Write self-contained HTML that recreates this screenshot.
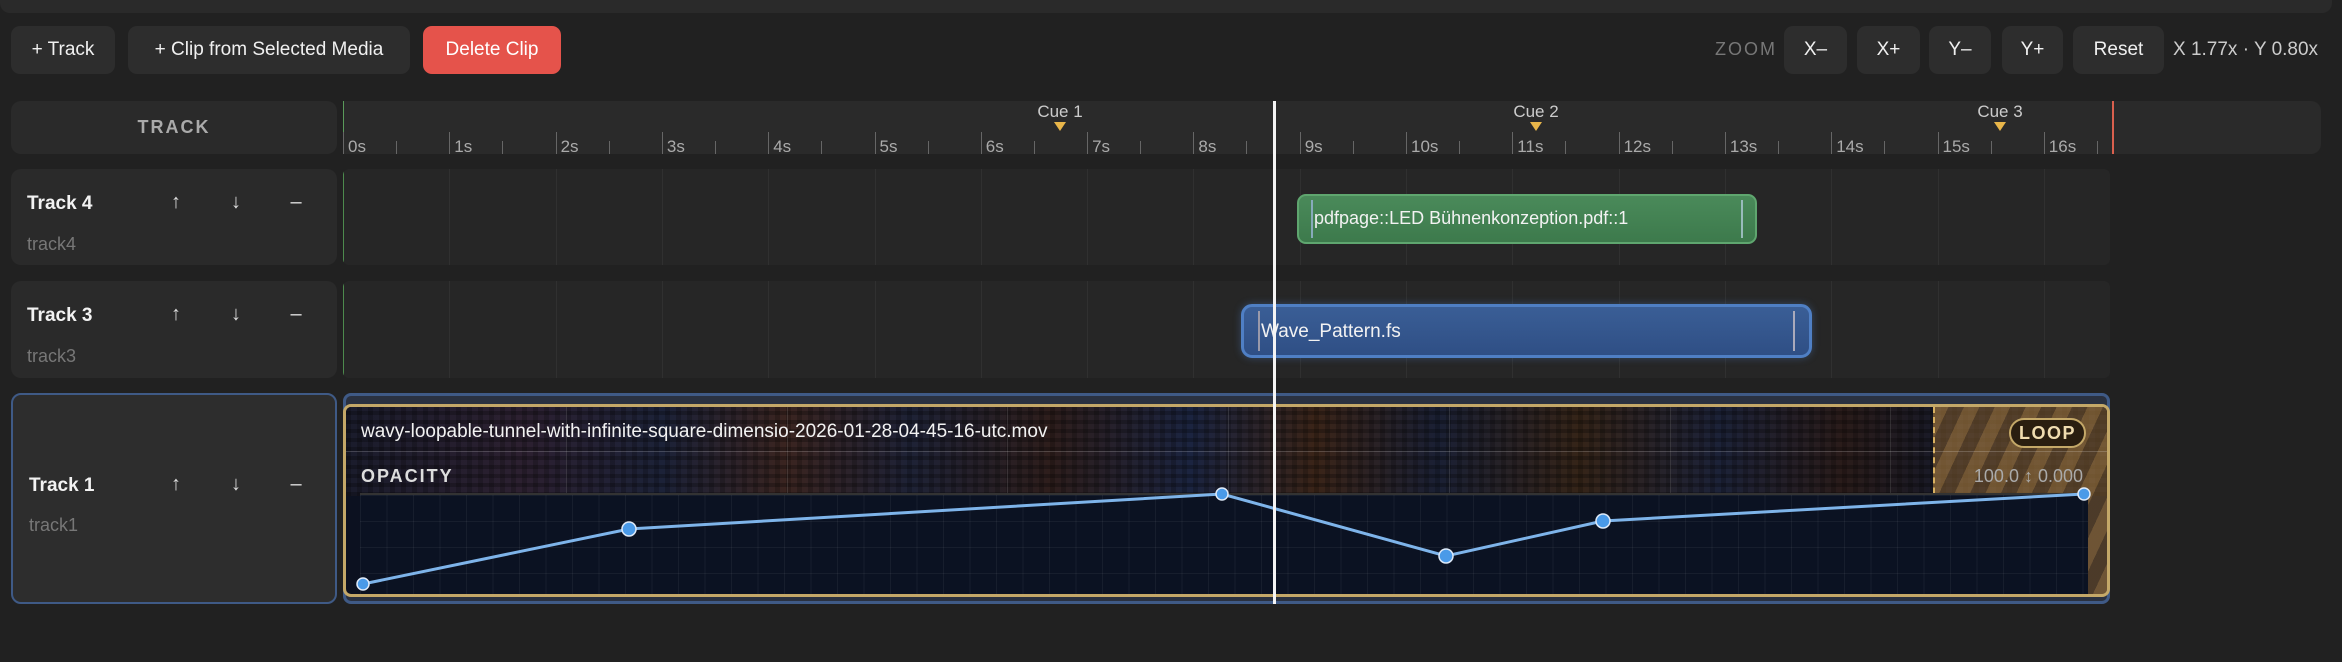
<!DOCTYPE html>
<html><head><meta charset="utf-8"><style>
*{box-sizing:border-box;margin:0;padding:0}
body{width:2342px;height:662px;background:#212121;position:relative;overflow:hidden;font-family:"Liberation Sans",sans-serif;color:#eee}
.a{position:absolute}
.btn{position:absolute;top:26px;height:48px;background:#2d2d2d;border-radius:9px;color:#f0f0f0;font-size:19px;display:flex;align-items:center;justify-content:center}
.panel{position:absolute;background:#2a2a2a;border-radius:10px}
.lane{position:absolute;left:343px;width:1767px;background:#262626;border-radius:6px;overflow:hidden}
.vl{position:absolute;top:0;bottom:0;width:1px;background:#303030}
.tn{position:absolute;left:16px;font-size:19px;font-weight:bold;color:#f2f2f2}
.ts{position:absolute;left:16px;font-size:18px;color:#777}
.ic{position:absolute;font-size:20px;color:#ddd;width:30px;text-align:center}
.tick{position:absolute;width:1px;background:#666}
.lbl{position:absolute;top:137px;font-size:17px;color:#aaa}
.cue{position:absolute;top:102px;font-size:17px;color:#ccc;transform:translateX(-50%)}
.tri{position:absolute;top:122px;width:0;height:0;border-left:6px solid transparent;border-right:6px solid transparent;border-top:9px solid #e9b64a;transform:translateX(-6px)}
</style></head><body>
<div class="a" style="left:0;top:0;width:2332px;height:13px;background:#2a2a2a;border-radius:0 0 10px 10px"></div>
<div class="btn" style="left:11px;width:104px">+ Track</div>
<div class="btn" style="left:128px;width:282px">+ Clip from Selected Media</div>
<div class="btn" style="left:423px;width:138px;background:#e5534b;color:#fff">Delete Clip</div>
<div class="a" style="left:1715px;top:39px;font-size:18px;color:#777;letter-spacing:2px">ZOOM</div>
<div class="btn" style="left:1784px;width:63px">X–</div>
<div class="btn" style="left:1857px;width:63px">X+</div>
<div class="btn" style="left:1929px;width:62px">Y–</div>
<div class="btn" style="left:2002px;width:61px">Y+</div>
<div class="btn" style="left:2073px;width:91px">Reset</div>
<div class="a" style="left:2173px;top:39px;font-size:19px;color:#ccc">X 1.77x · Y 0.80x</div>

<div class="panel" style="left:11px;top:101px;width:326px;height:53px;display:flex;align-items:center;justify-content:center;font-size:18px;font-weight:bold;color:#aaa;letter-spacing:2px">TRACK</div>
<div class="panel" style="left:343px;top:101px;width:1978px;height:53px;border-radius:0 10px 10px 0"></div>
<div class="a" style="left:343px;top:101px;width:1px;height:53px;background:#5a9a5a"></div>
<div id="ruler"></div>
<div class="a" style="left:2112px;top:101px;width:2px;height:53px;background:#d9604e"></div>
<div class="cue" style="left:1060px">Cue 1</div><div class="tri" style="left:1060px"></div>
<div class="cue" style="left:1536px">Cue 2</div><div class="tri" style="left:1536px"></div>
<div class="cue" style="left:2000px">Cue 3</div><div class="tri" style="left:2000px"></div>

<!-- Track 4 -->
<div class="panel" style="left:11px;top:169px;width:326px;height:96px">
<div class="tn" style="top:24px">Track 4</div><div class="ts" style="top:65px">track4</div>
<div class="ic" style="left:150px;top:22px">↑</div><div class="ic" style="left:210px;top:22px">↓</div><div class="ic" style="left:270px;top:22px">–</div></div>
<div class="lane g" style="top:169px;height:96px"><div class="a" style="left:0;top:0;width:1px;height:100%;background:#4d8a4d"></div></div>
<div class="a" style="left:1297px;top:194px;width:460px;height:50px;background:linear-gradient(#4a8a5a,#3d7a4c);border:2px solid #5fa66f;border-radius:9px;font-size:18px;color:#f2f2f2;padding:12px 0 0 15px">pdfpage::LED Bühnenkonzeption.pdf::1
<div class="a" style="left:12px;top:4px;width:2px;height:38px;background:#8ab"></div><div class="a" style="right:12px;top:4px;width:2px;height:38px;background:#9bb"></div></div>

<!-- Track 3 -->
<div class="panel" style="left:11px;top:281px;width:326px;height:97px">
<div class="tn" style="top:24px">Track 3</div><div class="ts" style="top:65px">track3</div>
<div class="ic" style="left:150px;top:22px">↑</div><div class="ic" style="left:210px;top:22px">↓</div><div class="ic" style="left:270px;top:22px">–</div></div>
<div class="lane g" style="top:281px;height:97px"><div class="a" style="left:0;top:0;width:1px;height:100%;background:#4d8a4d"></div></div>
<div class="a" style="left:1241px;top:304px;width:571px;height:54px;background:linear-gradient(#3a5e96,#2f4f85);border:3px solid #4f7fc4;border-radius:11px;font-size:19px;color:#f2f2f2;padding:14px 0 0 17px;box-shadow:0 0 8px rgba(80,130,200,.4)">Wave_Pattern.fs
<div class="a" style="left:14px;top:4px;width:2px;height:40px;background:#99a"></div><div class="a" style="right:14px;top:4px;width:2px;height:40px;background:#aab"></div></div>

<!-- Track 1 -->
<div class="panel" style="left:11px;top:393px;width:326px;height:211px;border:2px solid #3f5a86;background:#2d2d2d">
<div class="tn" style="top:80px">Track 1</div><div class="ts" style="top:120px">track1</div>
<div class="ic" style="left:148px;top:78px">↑</div><div class="ic" style="left:208px;top:78px">↓</div><div class="ic" style="left:268px;top:78px">–</div></div>
<div class="a" style="left:343px;top:393px;width:1767px;height:211px;background:#2a3140;border:3px solid #3f5a86;border-radius:8px"></div>
<div class="a" style="left:343px;top:404px;width:1767px;height:193px;border:3px solid #c4a868;border-radius:8px;overflow:hidden;background:#0c1120">
 <div class="a" style="left:0;top:0;width:100%;height:89px;background:
 repeating-linear-gradient(0deg,rgba(0,0,0,.25) 0 4px,transparent 4px 9px),
 repeating-linear-gradient(90deg,rgba(0,0,0,.2) 0 5px,transparent 5px 11px),
 linear-gradient(90deg,#1a1c2c 0%,#2c2030 10%,#1c2238 18%,#3a2420 25%,#1e2236 32%,#2e1e1c 40%,#1b2440 48%,#3a2418 55%,#1a2034 62%,#352418 70%,#1c2238 78%,#2a1c1a 85%,#1a1a26 90%,#1a1a22 100%)"></div>
 <div class="a" style="left:1587px;top:0;width:180px;height:100%;background:repeating-linear-gradient(115deg,rgba(190,140,70,.55) 0 14px,rgba(140,100,50,.5) 14px 28px)"></div>
 <div class="a" style="left:1587px;top:0;width:0;height:100%;border-left:2px dashed #d8b060"></div>
 <div class="a" style="left:0;top:44px;width:100%;height:1px;background:rgba(255,255,255,.18)"></div>
 <div id="fr"></div>
 <div class="a" style="left:15px;top:14px;font-size:19px;color:#f2f2f2">wavy-loopable-tunnel-with-infinite-square-dimensio-2026-01-28-04-45-16-utc.mov</div>
 <div class="a" style="left:15px;top:59px;font-size:18px;font-weight:bold;color:#ddd;letter-spacing:2px">OPACITY</div>
 <div class="a" style="left:1663px;top:11px;width:77px;height:30px;border:2px solid #c4a868;border-radius:15px;background:#2a1e10;color:#f0dcb0;font-size:18px;font-weight:bold;letter-spacing:1.5px;text-align:center;line-height:26px">LOOP</div>
 <div class="a" style="left:1587px;top:59px;width:150px;text-align:right;font-size:18px;color:#aaa">100.0 ↕ 0.000</div>
 <div class="a" style="left:14px;top:86px;width:1728px;height:104px;background:#0b1222;border-top:2px solid #333;background-image:linear-gradient(rgba(255,255,255,.05) 1px,transparent 1px),linear-gradient(90deg,rgba(255,255,255,.05) 1px,transparent 1px);background-size:26.5px 26px"></div>
</div>
<svg class="a" style="left:0;top:0" width="2342" height="662">
<polyline points="363,584 629,529 1222,494 1446,556 1603,521 2084,494" fill="none" stroke="#7eb4ea" stroke-width="3"/>
<g fill="#4a9ae8" stroke="#dfeaf8" stroke-width="1.5">
<circle cx="363" cy="584" r="6"/><circle cx="629" cy="529" r="7"/><circle cx="1222" cy="494" r="6"/><circle cx="1446" cy="556" r="7"/><circle cx="1603" cy="521" r="7"/><circle cx="2084" cy="494" r="6"/></g>
</svg>
<div class="a" style="left:1273px;top:101px;width:3px;height:503px;background:#f4f4f4"></div>
<script>
var r='';for(var i=0;i<=16;i++){var x=343+i*106.3;r+='<div class="tick" style="left:'+x+'px;top:132px;height:22px"></div><div class="lbl" style="left:'+(x+5)+'px">'+i+'s</div>';
r+='<div class="tick" style="left:'+(x+53)+'px;top:141px;height:13px"></div>';}
document.getElementById('ruler').outerHTML=r;
var g='';for(var i=1;i<=16;i++){g+='<div class="vl" style="left:'+(i*106.3)+'px"></div>';}
document.querySelectorAll('.g').forEach(function(e){e.insertAdjacentHTML('beforeend',g)});
var f='';[220,441,661,882,1103,1324,1544].forEach(function(x){f+='<div class="a" style="left:'+x+'px;top:0;width:1px;height:89px;background:rgba(255,255,255,.12)"></div>'});
document.getElementById('fr').outerHTML=f;
</script>
</body></html>
